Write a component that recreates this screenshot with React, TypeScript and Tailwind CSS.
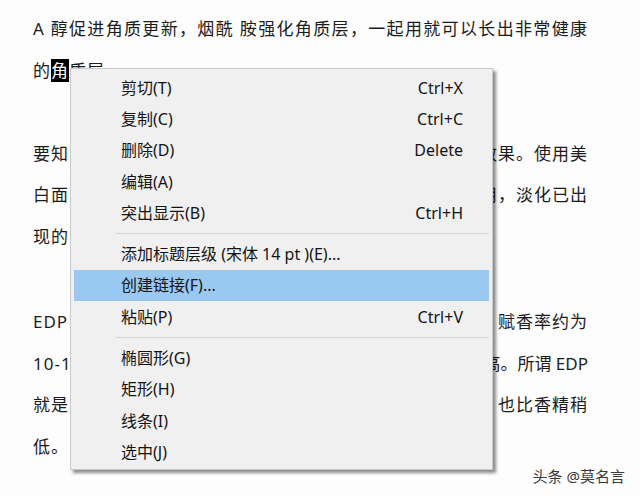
const font = { fontFamily: '"Noto Sans", "Noto Sans CJK SC", sans-serif' };

type Item = { label: string; key?: string; active?: boolean } | "sep";

const items: Item[] = [
  { label: "剪切(T)", key: "Ctrl+X" },
  { label: "复制(C)", key: "Ctrl+C" },
  { label: "删除(D)", key: "Delete" },
  { label: "编辑(A)" },
  { label: "突出显示(B)", key: "Ctrl+H" },
  "sep",
  { label: "添加标题层级 (宋体 14 pt )(E)..." },
  { label: "创建链接(F)...", active: true },
  { label: "粘贴(P)", key: "Ctrl+V" },
  "sep",
  { label: "椭圆形(G)" },
  { label: "矩形(H)" },
  { label: "线条(I)" },
  { label: "选中(J)" },
];

function Line({ left, right, tight }: { left: React.ReactNode; right?: string; tight?: boolean }) {
  return (
    <div className="flex h-[41.5px] items-center justify-between whitespace-nowrap">
      <span>{left}</span>
      {right && <span className={tight ? "tracking-normal" : ""}>{right}</span>}
    </div>
  );
}

export default function App() {
  return (
    <div className="relative h-[496px] w-[640px] overflow-hidden bg-[#fdfdfd] text-[#1c1c1c]" style={font}>
      <div className="w-[588px] pl-[33px] pt-[8px] text-[17px] tracking-[1px]">
        <div className="h-[41.5px] text-justify leading-[41.5px] whitespace-nowrap [text-align-last:justify]">
          A 醇促进角质更新，烟酰 胺强化角质层，一起用就可以长出非常健康
        </div>
        <Line
          left={
            <>
              的<span className="bg-black text-white">角</span>质层。
            </>
          }
        />
        <div className="h-[41.5px]" />
        <Line left="要知" right="效果。使用美" />
        <Line left="白面" right="用，淡化已出" />
        <Line left="现的" />
        <div className="h-[44px]" />
        <Line left="EDP" right="赋香率约为" />
        <Line left="10-15" right="高。所谓 EDP" tight />
        <Line left="就是" right="，也比香精稍" />
        <Line left="低。" />
      </div>

      <div className="absolute left-[70px] top-[68px] h-[402px] w-[423px] border border-[#c9c9c9] bg-[#f0f0f0] px-[3px] pt-[3px] shadow-[3px_3px_3px_rgba(0,0,0,0.45)]">
        {items.map((it, i) =>
          it === "sep" ? (
            <div key={i} className="flex h-[10px] items-center pl-[42px]">
              <div className="h-px w-full bg-[#d5d5d5]" />
            </div>
          ) : (
            <div
              key={i}
              className={`flex h-[31.3px] items-center justify-between pl-[47px] pr-[26px] text-[16px] text-[#141414] ${
                it.active ? "bg-[#99c8f0]" : ""
              }`}
            >
              <span>{it.label}</span>
              {it.key && <span>{it.key}</span>}
            </div>
          )
        )}
      </div>

      <div className="absolute right-[15px] top-[465px] text-[15px] text-[#3a3a3a] [text-shadow:0_0_2px_#fff]">
        头条 @莫名言
      </div>
    </div>
  );
}
